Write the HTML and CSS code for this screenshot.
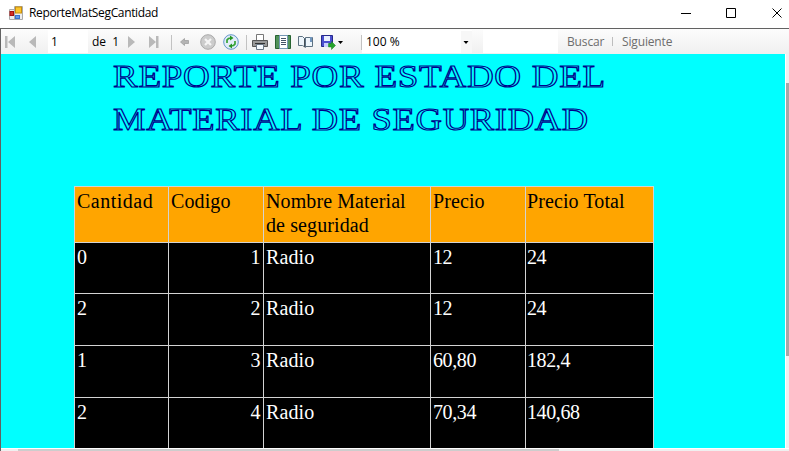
FILE: index.html
```
<!DOCTYPE html>
<html lang="es">
<head>
<meta charset="utf-8">
<title>ReporteMatSegCantidad</title>
<link rel="stylesheet" href="styles.css">
</head>
<body>
<div class="window">
  <header class="titlebar">
    <svg class="app-icon" width="14" height="14" viewBox="0 0 14 14"><path d="M5.5.5h8v13h-8zM.5 3.500h5v10h-5z" fill="#eee" stroke="#aaa"/><rect x="6.500" y="1" width="6" height="6" fill="#fbc52c" stroke="#c88e0c"/><rect x="1" y="5.500" width="3.500" height="4" fill="#d72f22" stroke="#a11212"/><rect x="6.500" y="9.500" width="4" height="3" fill="#6499e9" stroke="#3974cc"/></svg>
    <span class="caption">ReporteMatSegCantidad</span>
    <svg class="controls" width="109" height="12" viewBox="0 0 109 12" fill="none" stroke="#000"><path d="M1 6.500h10M46.500 1.500h9v9h-9z"/><path d="M92.500 1.500l9 9m0-9l-9 9"/></svg>
  </header>
  <main class="viewer">
    <nav class="toolbar">
      <svg class="nav-first" width="40" height="14" viewBox="0 0 40 14" fill="#b9b9b9"><path d="M1 1h2.500v12H1zM11 1v12L4 7zM32 1v12l-7-6z"/></svg>
      <span class="page">1</span>
      <span class="total">de&nbsp; 1</span>
      <svg class="nav-last" width="40" height="14" viewBox="0 0 40 14" fill="#b9b9b9"><path d="M1 1l7 6-7 6zM22 1l7 6-7 6zM29 1h2.500v12H29z"/></svg>
      <svg class="tools" width="196" height="18" viewBox="0 0 196 18">
        <path d="M2.500 2v15M77.500 2v15M192.500 2v15" stroke="#c2c2c2"/>
        <path d="M11.500 9L15.500 5.500v2h4v3h-4v2z" fill="#b4b4b4" stroke="#989898" stroke-width=".7"/>
        <circle cx="39" cy="9" r="7.300" fill="#ccc" stroke="#aaa"/><path d="M36 6l6 6m0-6l-6 6" stroke="#f5f5f5" stroke-width="2.200"/>
        <circle cx="62" cy="9" r="7.300" fill="#e2edf8" stroke="#6496cc"/>
        <path d="M58 10V7q1-2 4-2M66 8v3q-1 2-4 2" fill="none" stroke="#36a336" stroke-width="1.700"/><path d="M61 2.500l3.500 2.500-3.500 2.500zM63 10.500l-3.500 2.500 3.500 2.500z" fill="#259425"/>
        <path d="M87.500 1.500h7v6h-7z" fill="#fff" stroke="#777"/><path d="M83.500 7.500h15v6h-15z" fill="#999" stroke="#555"/><path d="M86 10.500h10" stroke="#333"/><path d="M87.500 11.500h7v5h-7z" fill="#f5faff" stroke="#6a7886"/>
        <path d="M106.500 2.500h15v13h-15z" fill="#51935a" stroke="#276331"/><path d="M110.500 2.500h8v13h-8z" fill="#fff" stroke="#7598b5"/><path d="M112 5.500h5m-5 2h5m-5 2h5m-5 2h5" stroke="#435367"/>
        <path d="M129.500 3.500h4l3 3v8l-3-2h-4zM136.500 4.500h7v9h-7z" fill="#edf5fb" stroke="#5d7181"/><path d="M135.500 6v8" stroke="#444f59"/><path d="M142 4v5" stroke="#7195bd" stroke-width="2"/>
        <path d="M152.500 2.500h11v11h-11z" fill="#4a4ed0" stroke="#25298a"/><path d="M155 3h6v5h-6z" fill="#eaf0ff"/><path d="M155 10h5v4h-5z" fill="#c8ceff"/><path d="M159.500 10.500h3V8.500l4 4-4 4v-2.500h-3z" fill="#26a32b" stroke="#198320" stroke-width=".5"/><path d="M169 8h5l-2.500 3z" fill="#000"/>
      </svg>
      <span class="zoom"><span>100 %</span><svg width="11" height="22" viewBox="0 0 11 22"><path fill="#f7f7f7" d="M0 0h11v22H0z"/><path d="M2.500 10h5l-2.500 3z"/></svg></span>
      <span class="search"></span>
      <span class="find">Buscar</span><i class="divider"></i><span class="next">Siguiente</span>
    </nav>
    <div class="canvas">
      <section class="report">
        <h1><span class="line-one">REPORTE POR ESTADO DEL</span><span class="line-two">MATERIAL DE SEGURIDAD</span></h1>
        <div class="table">
          <div class="th wide">Cantidad</div><div class="th">Codigo</div><div class="th">Nombre Material<br>de seguridad</div><div class="th">Precio</div><div class="th last">Precio Total</div>
          <div>0</div><div class="right">1</div><div class="name">Radio</div><div>12</div><div class="last">24</div>
          <div>2</div><div class="right">2</div><div class="name">Radio</div><div>12</div><div class="last">24</div>
          <div>1</div><div class="right">3</div><div class="name">Radio</div><div>60,80</div><div class="last">182,4</div>
          <div>2</div><div class="right">4</div><div class="name">Radio</div><div>70,34</div><div class="last">140,68</div>
        </div>
      </section>
      <div class="vscroll"><div class="vthumb"></div></div>
    </div>
    <div class="hscroll"><div class="hthumb"></div></div>
  </main>
</div>
</body>
</html>
```
FILE: styles.css
```
* { box-sizing: border-box; }
body { margin: 0; overflow: hidden; background: #fff; font-family: "Open Sans", sans-serif; font-size: 12px; }
svg { display: block; flex: none; }
.window { width: 789px; height: 451px; display: flex; flex-direction: column; overflow: hidden; }
.titlebar { height: 28px; flex: none; display: flex; align-items: center; padding: 0 0 3px 9px; }
.caption { margin-left: 6px; letter-spacing: -.35px; white-space: nowrap; }
.controls { margin-left: auto; }
.viewer { flex: 1; min-height: 0; border-top: 1px solid #626262; border-left: 1px solid #626262; display: flex; flex-direction: column; }
.toolbar { height: 25px; flex: none; display: flex; align-items: center; background: linear-gradient(#fcfcfc, #f0f0f0); white-space: nowrap; }
.nav-first { margin-left: 3px; }
.page { width: 40px; height: 23px; margin-left: 4px; padding: 3px; background: #fff; line-height: 17px; }
.total { width: 31px; margin-left: 4px; }
.nav-last { margin-left: 4px; }
.tools { margin-left: 2px; width: 196px; }
.zoom { width: 110px; height: 23px; margin-left: -3px; padding-left: 4px; background: #fff; display: flex; align-items: center; justify-content: space-between; }
.search { width: 75px; height: 23px; margin-left: 11px; background: #fff; }
.find, .next { color: #6d6d6d; letter-spacing: -.15px; }
.find { width: 38px; margin-left: 9px; }
.divider { width: 1px; height: 9px; margin: 0 9px 0 7px; background: #bdbdbd; }
.canvas { flex: 1; min-height: 0; display: flex; }
.report { width: 784px; flex: none; overflow: hidden; background: #0ff; }
h1 { height: 132px; margin: 0; padding: 1px 0 0 112px; font: 32px/43px "Liberation Serif", serif; color: #0ff; -webkit-text-stroke: 1.1px #00008b; white-space: nowrap; }
h1 span { display: block; transform-origin: left; }
.line-one { letter-spacing: .6px; transform: scaleX(1.158); }
.line-two { letter-spacing: .6px; transform: scaleX(1.142); }
.table { width: 580px; margin-left: 73px; padding: 1px; display: grid; grid-template-columns: 93px 94px 166px 94px 127px; grid-template-rows: 55px 50px 51px 51px 51px; gap: 1px; background: #d3d3d3; font: 20px/24px "Liberation Serif", serif; }
.table > div { padding: 2px; background: #000; color: #fff; letter-spacing: -.4px; white-space: nowrap; }
.table > .th { background: #ffa500; color: #000; letter-spacing: .1px; }
.table > .wide { letter-spacing: .5px; }
.table > .name { letter-spacing: .1px; }
.table > .right { text-align: right; padding-right: 3px; }
.table > .last { padding-left: 1px; }
.vscroll { flex: 1; margin-left: 1px; background: #f0f0f0; }
.vthumb { height: 273px; margin-top: 29px; background: #a6a6a6; }
.hscroll { height: 3px; flex: none; padding-left: 17px; border-top: 1px solid #fff; background: #f0f0f0; }
.hthumb { width: 541px; height: 2px; background: #cdcdcd; }
```
